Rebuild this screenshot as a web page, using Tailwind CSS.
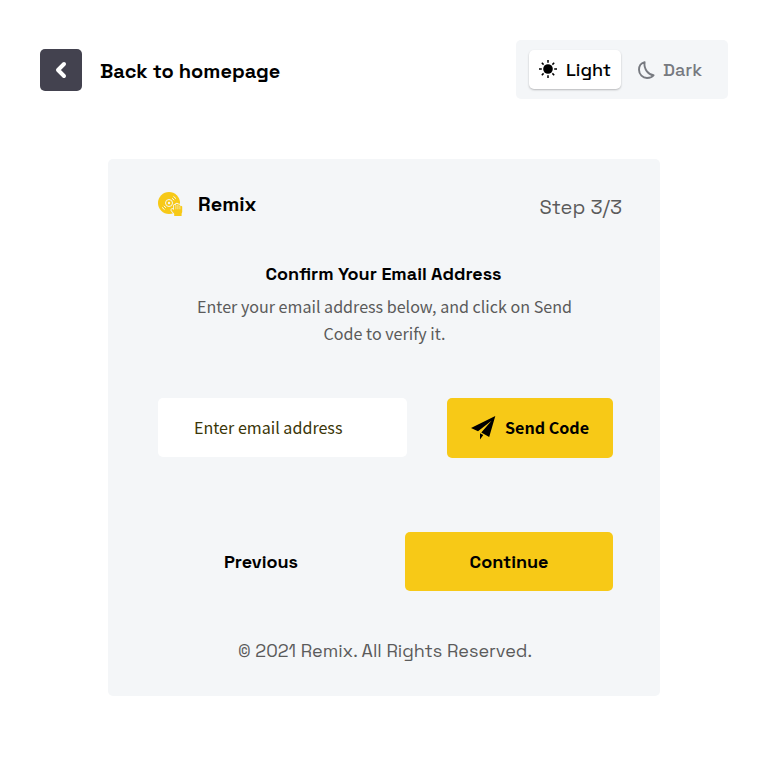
<!DOCTYPE html>
<html lang="en">
<head>
<meta charset="utf-8">
<title>Remix</title>
<script src="https://cdn.jsdelivr.net/npm/@tailwindcss/browser@4"></script>
</head>
<body class="bg-white font-['Space_Grotesk','Inter',sans-serif] text-black">
<div class="w-[768px] h-[760px] px-10 pt-10 overflow-hidden">
  <header class="flex items-start justify-between h-[59px] whitespace-nowrap">
    <a class="flex items-center gap-[18px] mt-[9px]">
      <span class="flex items-center justify-center w-[42px] h-[42px] rounded-[5px] bg-[#43424f]">
        <svg class="w-[42px] h-[42px]" viewBox="0 0 42 42" fill="none" stroke="#fff" stroke-width="4" stroke-linecap="round" stroke-linejoin="round"><path d="M24 15l-6 6 6 6"/></svg>
      </span>
      <span class="text-[20px] leading-[26px] font-semibold mt-[2px]">Back to homepage</span>
    </a>
    <div class="flex w-[212px] h-[59px] rounded-[5px] bg-[#f4f6f8] pt-[10px] pl-[13px]">
      <div class="flex items-center w-[92px] h-[39px] rounded-[5px] bg-white pl-[10px] shadow-[0_1px_2px_rgba(0,0,0,0.25)]">
        <svg class="w-[18px] h-[18px] -mt-[2px]" viewBox="0 0 18 18" stroke="#000" stroke-width="1.5"><circle cx="9" cy="9" r="4.8" fill="#000" stroke="none"/><path d="M9 0v2.800M9 15.200V18M0 9h2.800M15.200 9H18M2.800 2.800l1.800 1.800M13.400 13.400l1.800 1.800M2.800 15.200l1.800-1.800M13.400 4.600l1.800-1.800"/></svg>
        <span class="ml-[9px] -mt-px text-[18px] font-medium">Light</span>
      </div>
      <div class="flex items-center h-[39px] ml-[17px] text-[#777a80]">
        <svg class="w-[17px] h-[18px]" viewBox="0 0 17 18" fill="none" stroke="#777a80" stroke-width="1.9" stroke-linejoin="round"><path d="M6.600 1.200C3 2.200 1 5.500 1 8.800C1 13.500 4.800 17 9 17C12 17 14.300 16.300 15.600 14.300C10.800 14 5.600 8.500 6.600 1.200Z"/></svg>
        <span class="ml-[8px] -mt-px text-[18px] font-medium">Dark</span>
      </div>
    </div>
  </header>

  <main class="w-[552px] h-[537px] mt-[60px] ml-[68px] rounded-[5px] bg-[#f4f6f8] pl-[50px] pr-[38px] whitespace-nowrap flex flex-col">
    <div class="flex justify-between pt-[32px]">
      <div class="flex items-start">
        <svg class="w-[26px] h-[26px]" viewBox="0 0 26 26">
          <circle cx="11" cy="12" r="11" fill="#f7c917"/>
          <g fill="none" stroke="#f4f6f8"><circle cx="11" cy="12" r="3.500" stroke-width="1"/><path stroke-width="1" d="M14 7.200l2.200 2M15.400 5.300l2.600 2.400M8 16.800l-2.200-2M6.600 18.700L4 16.300"/></g>
          <circle cx="11" cy="12" r="1.200" fill="#f4f6f8"/>
          <path fill="#f7c917" stroke="#f4f6f8" stroke-width="1.600" paint-order="stroke" stroke-linejoin="round" d="M16.200 25V22.800L13.300 19.300Q13.200 17.800 14.500 18L16 19V14.200Q16.900 13.200 17.800 14.200V13.200Q18.900 12.200 19.900 13.200V13.700Q20.900 12.900 21.900 13.900V14.900Q23.200 14.300 24.200 15.400V21L23.600 22.800V25Z"/>
          <path d="M17.900 14v4.300M19.900 14v4.300M21.900 14.800v3.500" stroke="#f4f6f8" stroke-width=".6"/>
        </svg>
        <span class="ml-[14px] text-[20px] leading-[26px] font-semibold">Remix</span>
      </div>
      <span class="mt-[3px] text-[20px] leading-[26px] text-[#5b5b5b]">Step 3/3</span>
    </div>
    <h1 class="mt-[41px] text-center text-[18px] leading-[26px] font-semibold w-[451px]">Confirm Your Email Address</h1>
    <p class="mt-[6px] text-center text-[16.1px] leading-[27px] w-[453px] text-[#5b5b5b] font-['Noto_Sans_CJK_SC',sans-serif]">Enter your email address below, and click on Send<br>Code to verify it.</p>
    <div class="mt-[51px] flex gap-10 font-['Noto_Sans_CJK_SC',sans-serif] text-[16.1px] leading-[27px]">
      <div class="w-[249px] h-[59px] rounded-[5px] bg-white pl-[36px] pt-[16px] text-[#3b3608]">Enter email address</div>
      <button class="flex w-[166px] h-[60px] rounded-[5px] bg-[#f7c917] pl-[24px] pt-[16px] font-bold">
        <svg class="w-[25px] h-[25px] mt-[1px]" viewBox="0 0 25 25"><path d="M24.300 1L0 13l7 3.200L20.500 5.800 10.300 17.600 18.200 22zM9 18.300v6.200l3.300-4.400z"/></svg>
        <span class="ml-[9px]">Send Code</span>
      </button>
    </div>
    <div class="mt-[74px] flex text-[18px] leading-[59px] font-semibold">
      <span class="w-[247px] pl-[66px]">Previous</span>
      <button class="w-[208px] h-[59px] rounded-[5px] bg-[#f7c917]">Continue</button>
    </div>
    <footer class="mt-[47px] pl-[80px] text-[18px] leading-[26px] text-[#5b5b5b]">© 2021 Remix. All Rights Reserved.</footer>
  </main>
</div>
</body>
</html>
